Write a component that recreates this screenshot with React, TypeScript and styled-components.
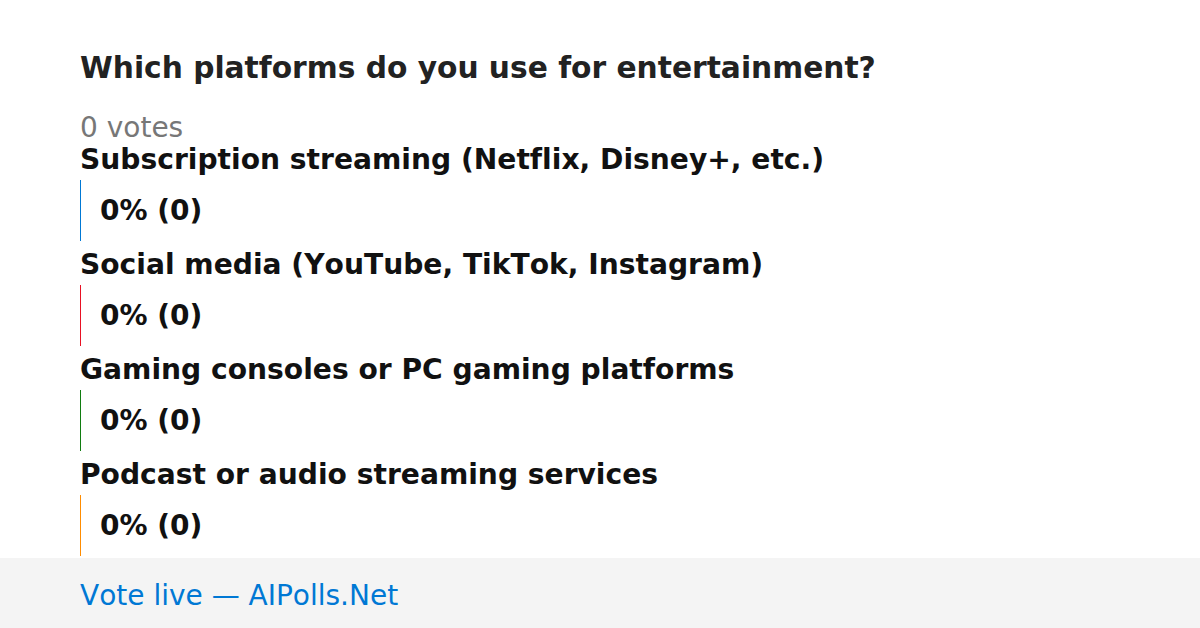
import React from 'react'
import styled, { createGlobalStyle } from 'styled-components'

const GlobalStyle = createGlobalStyle`
  html, body {
    margin: 0;
    padding: 0;
    background: #ffffff;
    font-family: 'DejaVu Sans', sans-serif;
    font-kerning: none;
    font-variant-ligatures: none;
  }
`

interface PollOption {
  label: string
  percent: number
  count: number
  color: string
}

const options: PollOption[] = [
  { label: 'Subscription streaming (Netflix, Disney+, etc.)', percent: 0, count: 0, color: '#0078d4' },
  { label: 'Social media (YouTube, TikTok, Instagram)', percent: 0, count: 0, color: '#e81123' },
  { label: 'Gaming consoles or PC gaming platforms', percent: 0, count: 0, color: '#107c10' },
  { label: 'Podcast or audio streaming services', percent: 0, count: 0, color: '#ff8c00' },
]

const OptionRow: React.FC<{ option: PollOption }> = ({ option }) => (
  <Option>
    <Label>{option.label}</Label>
    <Bar $color={option.color}>
      <Result>
        {option.percent}% ({option.count})
      </Result>
    </Bar>
  </Option>
)

export default function App() {
  return (
    <>
      <GlobalStyle />
      <Page>
        <Main>
          <Title>Which platforms do you use for entertainment?</Title>
          <Votes>0 votes</Votes>
          <Options>
            {options.map((o) => (
              <OptionRow key={o.label} option={o} />
            ))}
          </Options>
        </Main>
        <Footer>
          <FooterLink>Vote live — AIPolls.Net</FooterLink>
        </Footer>
      </Page>
    </>
  )
}

const Page = styled.div`
  width: 1200px;
  height: 628px;
  display: flex;
  flex-direction: column;
  overflow: hidden;
`

const Main = styled.div`
  flex: 1;
  padding: 50px 80px 0;
  display: flex;
  flex-direction: column;
`

const Title = styled.h1`
  margin: 0;
  font-size: 29.7px;
  line-height: 36px;
  font-weight: bold;
  color: #222222;
`

const Votes = styled.div`
  margin-top: 25px;
  margin-bottom: -1px;
  font-size: 28px;
  line-height: 34px;
  color: #777777;
`

const Options = styled.div`
  display: flex;
  flex-direction: column;
  gap: 8px;
`

const Option = styled.div`
  display: flex;
  flex-direction: column;
  gap: 4px;
`

const Label = styled.div`
  font-size: 28.15px;
  line-height: 32px;
  font-weight: bold;
  color: #111111;
`

const Bar = styled.div<{ $color: string }>`
  height: 61px;
  border-left: 1px solid ${({ $color }) => $color};
  display: flex;
  align-items: center;
  padding-left: 19px;
`

const Result = styled.span`
  font-size: 28px;
  font-weight: bold;
  color: #111111;
`

const Footer = styled.div`
  height: 70px;
  flex-shrink: 0;
  box-sizing: border-box;
  padding: 4px 80px 0;
  background: #f4f4f4;
  display: flex;
  align-items: center;
`

const FooterLink = styled.span`
  font-size: 28px;
  color: #0078d4;
`
